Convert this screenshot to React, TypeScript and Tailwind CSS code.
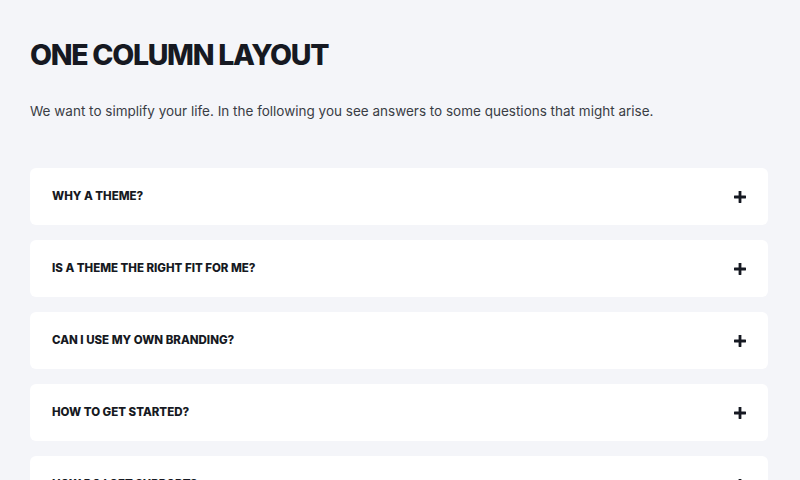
const questions = [
  'Why a theme?',
  'Is a theme the right fit for me?',
  'Can I use my own branding?',
  'How to get started?',
  'How do I get support?',
]

function PlusIcon() {
  return (
    <svg width="12" height="12" viewBox="0 0 12 12" className="shrink-0 fill-[#161922]">
      <rect x="4.6" y="0" width="2.8" height="12" rx="0.4" />
      <rect x="0" y="4.6" width="12" height="2.8" rx="0.4" />
    </svg>
  )
}

export default function App() {
  return (
    <div className="min-h-screen bg-[#f4f5f9] font-['Inter',sans-serif] text-[#161922]">
      <div className="px-[30px] pt-[36px] pb-10">
        <h1 className="text-[28.5px] font-extrabold uppercase leading-[38px] tracking-[-1.3px]">
          One Column Layout
        </h1>
        <p className="mt-[26px] text-[13.5px] leading-[22px] text-[#3a3d45]">
          We want to simplify your life. In the following you see answers to some questions that might arise.
        </p>

        <div className="mt-[46px] flex w-[738px] flex-col gap-[15px]">
          {questions.map((q) => (
            <div
              key={q}
              className="flex h-[57px] items-center justify-between rounded-md bg-white px-[22px]"
            >
              <span className="text-[11.5px] font-extrabold uppercase">{q}</span>
              <PlusIcon />
            </div>
          ))}
        </div>
      </div>
    </div>
  )
}
